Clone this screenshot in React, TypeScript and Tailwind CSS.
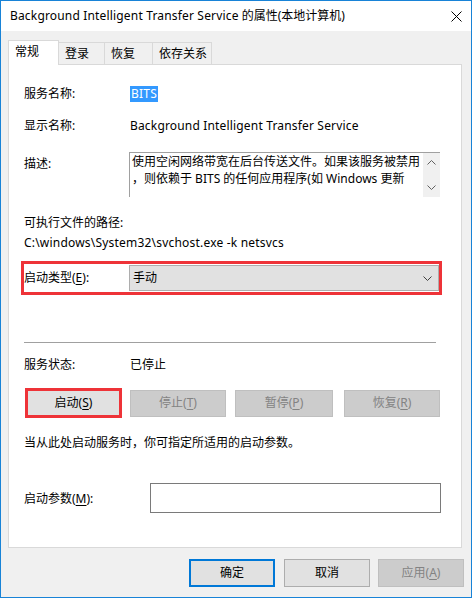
import React from 'react';

const font = "font-['Segoe_UI','Noto_Sans','Noto_Sans_CJK_SC',sans-serif]";

function Chevron({ dir, className }: { dir: 'up' | 'down'; className?: string }) {
  return (
    <svg width="9" height="5" viewBox="0 0 9 5" className={className}>
      <path
        d={dir === 'up' ? 'M0.5 4.5 L4.5 0.5 L8.5 4.5' : 'M0.5 0.5 L4.5 4.5 L8.5 0.5'}
        fill="none"
        stroke="currentColor"
        strokeWidth="1"
      />
    </svg>
  );
}

function Btn({
  children,
  disabled,
  className = '',
}: {
  children: React.ReactNode;
  disabled?: boolean;
  className?: string;
}) {
  return (
    <div
      className={`flex items-center justify-center border ${
        disabled ? 'bg-[#cccccc] border-[#bfbfbf] text-[#838383]' : 'bg-[#e1e1e1] border-[#adadad] text-black'
      } ${className}`}
    >
      {children}
    </div>
  );
}

export default function App() {
  const tabs = ['登录', '恢复', '依存关系'];
  const tabW = ['w-[46px]', 'w-[48px]', 'w-[59px]'];

  return (
    <div className={`w-[472px] h-[598px] border border-[#1883d7] bg-[#f0f0f0] flex flex-col text-[12px] leading-[20px] text-black ${font}`}>
      {/* title bar */}
      <div className="h-[30px] bg-white flex items-center pl-[9px] pr-[9px] shrink-0">
        <span className="flex-1 whitespace-nowrap">
          <span className="tracking-[0.17px]">Background Intelligent Transfer Service</span> 的属性(本地计算机)
        </span>
        <svg width="11" height="11" viewBox="0 0 11 11" className="mt-[1px]">
          <path d="M0.5 0.5 L10.5 10.5 M10.5 0.5 L0.5 10.5" stroke="#000" strokeWidth="1" />
        </svg>
      </div>

      <div className="pt-[9px] px-[7px] flex flex-col">
        {/* tabs */}
        <div className="flex items-end h-[24px] relative z-10">
          <div className="w-[51px] h-[25px] bg-white border border-[#d9d9d9] border-b-0 -mb-px pl-[6px] pt-[1px]">常规</div>
          {tabs.map((t, i) => (
            <div
              key={t}
              className={`${tabW[i]} h-[22px] border border-[#d9d9d9] border-b-0 border-l-0 pl-[6px] leading-[21px]`}
            >
              {t}
            </div>
          ))}
        </div>

        {/* panel */}
        <div className="w-[454px] h-[484px] bg-white border border-[#d9d9d9] flex flex-col pl-[15px]">
          <div className="mt-[19px] h-[20px] flex items-center">
            <span className="w-[106px]">服务名称:</span>
            <span className="bg-[#3399ff] text-white px-[1px] leading-[16px] tracking-[0.2px]">BITS</span>
          </div>

          <div className="mt-[12px] h-[20px] flex items-center">
            <span className="w-[106px]">显示名称:</span>
            <span className="whitespace-nowrap tracking-[0.17px]">Background Intelligent Transfer Service</span>
          </div>

          <div className="mt-[16px] flex items-start">
            <span className="w-[105px] pt-[2px]">描述:</span>
            <div className="w-[311px] h-[45px] border-t border-l border-[#a0a0a0] flex">
              <div className="flex-1 pl-[2px] leading-[17px] overflow-hidden whitespace-nowrap">
                <div>使用空闲网络带宽在后台传送文件。如果该服务被禁用</div>
                <div>，则依赖于 BITS 的任何应用程序(如 Windows 更新</div>
              </div>
              <div className="w-[17px] bg-[#f0f0f0] flex flex-col items-center justify-between py-[7px] text-[#606060]">
                <Chevron dir="up" />
                <Chevron dir="down" />
              </div>
            </div>
          </div>

          <div className="mt-[16px] h-[20px] flex items-center">可执行文件的路径:</div>
          <div className="h-[20px] flex items-center whitespace-nowrap tracking-[0.2px]">C:\windows\System32\svchost.exe -k netsvcs</div>

          <div className="mt-[8px] ml-[-3px] w-[421px] h-[34px] border-[3px] border-[#ee3338] flex items-center">
            <span className="w-[105px]">
              启动类型(<span className="underline underline-offset-2">E</span>):
            </span>
            <div className="flex-1 h-[26px] bg-[#e1e1e1] border border-[#adadad] flex items-center pl-[3px] pr-[6px]">
              <span className="flex-1">手动</span>
              <Chevron dir="down" className="text-[#404040]" />
            </div>
          </div>

          <div className="mt-[47px] w-[412px] h-px bg-[#a0a0a0]" />

          <div className="mt-[12px] h-[20px] flex items-center">
            <span className="w-[106px]">服务状态:</span>
            <span>已停止</span>
          </div>

          <div className="mt-[13px] h-[30px] flex items-center">
            <div className="ml-[1px] w-[97px] h-[30px] border-[3px] border-[#ee3338]">
              <div className="w-full h-full bg-[#e1e1e1] flex items-center justify-center">
                启动(<span className="underline underline-offset-2">S</span>)
              </div>
            </div>
            <Btn disabled className="ml-[8px] w-[96px] h-[27px]">
              停止(<span className="underline underline-offset-2">T</span>)
            </Btn>
            <Btn disabled className="ml-[9px] w-[98px] h-[27px]">
              暂停(<span className="underline underline-offset-2">P</span>)
            </Btn>
            <Btn disabled className="ml-[11px] w-[96px] h-[27px]">
              恢复(<span className="underline underline-offset-2">R</span>)
            </Btn>
          </div>

          <div className="mt-[15px] h-[20px] flex items-center">当从此处启动服务时，你可指定所适用的启动参数。</div>

          <div className="mt-[30px] h-[30px] flex items-center">
            <span className="w-[126px] pt-[2px]">
              启动参数(<span className="underline underline-offset-2">M</span>):
            </span>
            <div className="w-[291px] h-[30px] border border-[#7a7a7a] bg-white" />
          </div>
        </div>

        {/* dialog buttons */}
        <div className="mt-[11px] flex">
          <Btn className="ml-[181px] w-[86px] h-[28px] !border-2 !border-[#0078d7]">确定</Btn>
          <Btn className="ml-[9px] w-[86px] h-[28px]">取消</Btn>
          <Btn disabled className="ml-[8px] w-[86px] h-[28px]">
            应用(<span className="underline underline-offset-2">A</span>)
          </Btn>
        </div>
      </div>
    </div>
  );
}
